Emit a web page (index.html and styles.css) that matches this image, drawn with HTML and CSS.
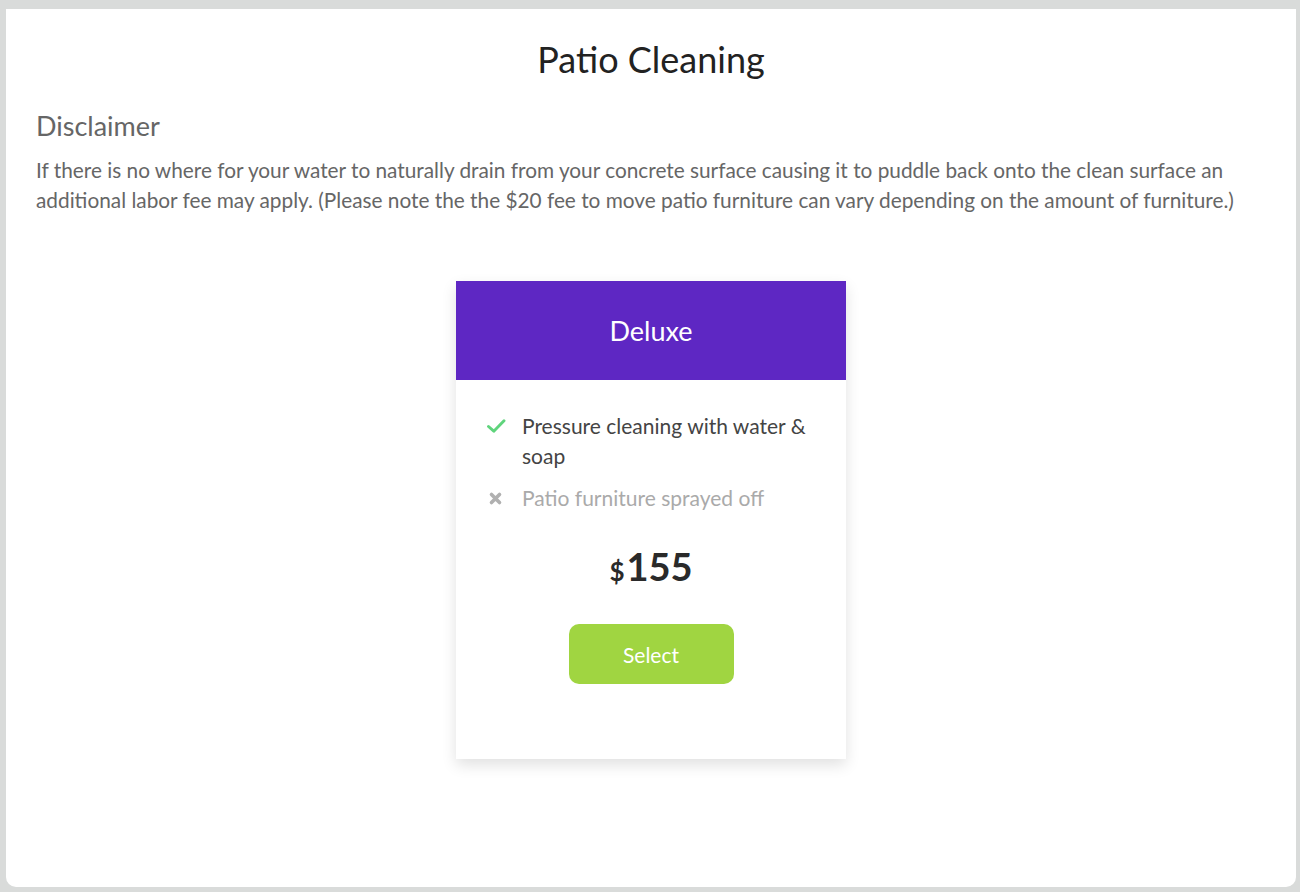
FILE: index.html
```html
<!DOCTYPE html>
<html>
<head>
<meta charset="utf-8">
<link rel="stylesheet" href="styles.css">
</head>
<body>
<div class="panel">
  <h1 class="title">Patio Cleaning</h1>
  <h2 class="sub">Disclaimer</h2>
  <p class="text">If there is no where for your water to naturally drain from your concrete surface causing it to puddle back onto the clean surface an additional labor fee may apply. (Please note the the $20 fee to move patio furniture can vary depending on the amount of furniture.)</p>
  <div class="plans">
    <div class="card">
      <div class="card-head">Deluxe</div>
      <div class="card-body">
        <ul class="features">
          <li class="feat on">
            <svg class="ico" viewBox="0 0 20 20" width="20" height="20"><path d="M2.5 10.5 L7.8 15.2 L18 4.8" fill="none" stroke="#5fd47c" stroke-width="2.9" stroke-linecap="round" stroke-linejoin="round"/></svg>
            <span>Pressure cleaning with water &amp; soap</span>
          </li>
          <li class="feat off">
            <svg class="ico" viewBox="0 0 20 20" width="20" height="20"><path d="M5.5 6.5 L13.5 14.5 M13.5 6.5 L5.5 14.5" fill="none" stroke="#b0b0b0" stroke-width="3.6" stroke-linecap="round"/></svg>
            <span>Patio furniture sprayed off</span>
          </li>
        </ul>
        <div class="price"><span class="cur">$</span>155</div>
        <button class="btn">Select</button>
      </div>
    </div>
  </div>
</div>
</body>
</html>
```
FILE: styles.css
```css
html, body {
  margin: 0;
  padding: 0;
}
body {
  background: #d9dbda;
  font-family: Lato, "Open Sans", sans-serif;
  padding: 9px 4px 5px 6px;
  height: 892px;
  box-sizing: border-box;
}
.panel {
  background: #fff;
  height: 878px;
  border-radius: 0 0 10px 10px;
  padding: 0 30px;
  box-sizing: border-box;
}
.title {
  margin: 0;
  padding-top: 28px;
  text-align: center;
  font-weight: 400;
  font-size: 36px;
  line-height: 44px;
  color: #222;
}
.sub {
  margin: 29px 0 0;
  font-weight: 400;
  font-size: 27px;
  line-height: 32px;
  color: #666;
}
.text {
  margin: 13px 0 0;
  font-size: 20.8px;
  line-height: 30px;
  color: #666;
}
.plans {
  display: flex;
  justify-content: center;
  margin-top: 66px;
}
.card {
  width: 390px;
  background: #fff;
  box-shadow: 0 6px 14px rgba(0,0,0,0.12);
}
.card-head {
  background: #5e27c3;
  color: #fff;
  height: 99px;
  display: flex;
  align-items: center;
  justify-content: center;
  font-size: 27px;
}
.card-body {
  padding: 31px 30px 75px;
  display: flex;
  flex-direction: column;
  align-items: center;
}
.features {
  list-style: none;
  margin: 0;
  padding: 0;
  align-self: stretch;
}
.feat {
  display: flex;
  gap: 16px;
  font-size: 21px;
  line-height: 30px;
  margin-bottom: 12px;
}
.feat .ico {
  flex: none;
  margin-top: 5px;
}
.feat.on { color: #444; }
.feat.off { color: #aaa; }
.price {
  margin-top: 19px;
  font-size: 38px;
  font-weight: 700;
  color: #2a2a2a;
  line-height: 44px;
}
.price .cur {
  font-size: 26px;
  margin-right: 2px;
}
.btn {
  margin-top: 31px;
  width: 165px;
  height: 60px;
  border: none;
  border-radius: 10px;
  background: #a0d541;
  color: #fff;
  font-family: Lato, sans-serif;
  font-size: 21px;
  cursor: pointer;
}
```
